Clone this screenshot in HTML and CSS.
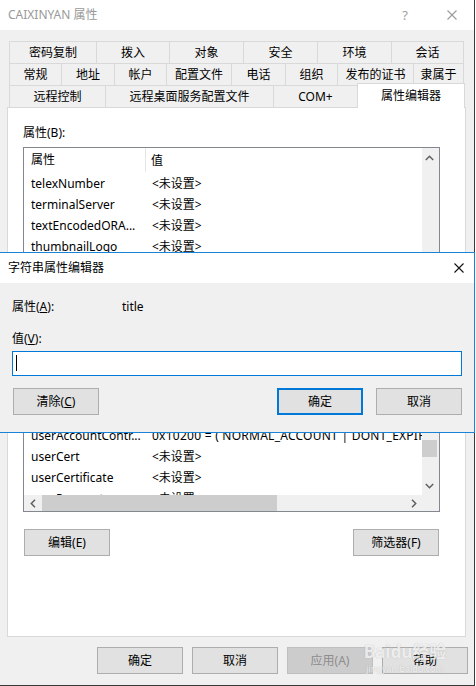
FILE: index.html
```html
<!DOCTYPE html>
<html lang="zh-CN">
<head>
<meta charset="utf-8">
<title>CAIXINYAN 属性</title>
<link rel="stylesheet" href="styles.css">
</head>
<body>
<div class="screen">
  <div class="window">
    <div class="titlebar">
      <span class="title">CAIXINYAN 属性</span>
      <span class="help">?</span>
      <svg class="close" width="10" height="10" viewBox="0 0 10 10"><path d="M0.5 0.5L9.5 9.5M9.5 0.5L0.5 9.5" stroke="#9a9a9a" stroke-width="1.1" fill="none"/></svg>
    </div>

    <div class="tabs">
      <div class="tabrow r1">
        <div class="tab">密码复制</div><div class="tab">拨入</div><div class="tab">对象</div><div class="tab">安全</div><div class="tab">环境</div><div class="tab">会话</div>
      </div>
      <div class="tabrow r2">
        <div class="tab">常规</div><div class="tab">地址</div><div class="tab">帐户</div><div class="tab">配置文件</div><div class="tab">电话</div><div class="tab">组织</div><div class="tab">发布的证书</div><div class="tab">隶属于</div>
      </div>
      <div class="tabrow r3">
        <div class="tab">远程控制</div><div class="tab">远程桌面服务配置文件</div><div class="tab">COM+</div><div class="tab sel">属性编辑器</div>
      </div>
    </div>

    <div class="panel">
      <div class="label">属性(B):</div>
      <div class="list">
        <div class="list-main">
          <div class="lhead"><div class="c1">属性</div><div class="c2 h2">值</div></div>
          <div class="row"><span class="c1">telexNumber</span><span class="c2">&lt;未设置&gt;</span></div>
          <div class="row"><span class="c1">terminalServer</span><span class="c2">&lt;未设置&gt;</span></div>
          <div class="row"><span class="c1">textEncodedORA...</span><span class="c2">&lt;未设置&gt;</span></div>
          <div class="row"><span class="c1">thumbnailLogo</span><span class="c2">&lt;未设置&gt;</span></div>
          <div class="hidden-rows"></div>
          <div class="row"><span class="c1">userAccountContr...</span><span class="c2 wide">0x10200 = ( NORMAL_ACCOUNT | DONT_EXPIRE_PASSWD )</span></div>
          <div class="row"><span class="c1">userCert</span><span class="c2">&lt;未设置&gt;</span></div>
          <div class="row"><span class="c1">userCertificate</span><span class="c2">&lt;未设置&gt;</span></div>
          <div class="row"><span class="c1">userParameters</span><span class="c2">&lt;未设置&gt;</span></div>
        </div>
        <div class="vscroll">
          <div class="arrow up"><svg width="9" height="6" viewBox="0 0 9 6"><polyline points="0.8,5 4.5,1.3 8.2,5" fill="none" stroke="#606060" stroke-width="1.5"/></svg></div>
          <div class="vspace1"></div>
          <div class="vthumb"></div>
          <div class="vspace2"></div>
          <div class="arrow down"><svg width="9" height="6" viewBox="0 0 9 6"><polyline points="0.8,1 4.5,4.7 8.2,1" fill="none" stroke="#606060" stroke-width="1.5"/></svg></div>
        </div>
        <div class="hscroll">
          <div class="harrow"><svg width="6" height="9" viewBox="0 0 6 9"><polyline points="5,0.8 1.3,4.5 5,8.2" fill="none" stroke="#606060" stroke-width="1.5"/></svg></div>
          <div class="hthumb"></div>
          <div class="hspace"></div>
          <div class="harrow"><svg width="6" height="9" viewBox="0 0 6 9"><polyline points="1,0.8 4.7,4.5 1,8.2" fill="none" stroke="#606060" stroke-width="1.5"/></svg></div>
        </div>
        <div class="corner"></div>
      </div>
      <div class="pbtns">
        <button class="btn">编辑(E)</button>
        <button class="btn">筛选器(F)</button>
      </div>
    </div>

    <div class="footer">
      <button class="btn">确定</button>
      <button class="btn">取消</button>
      <button class="btn disabled">应用(A)</button>
      <button class="btn">帮助</button>
    </div>
  </div>

  <div class="dialog">
    <div class="dtitle">
      <span class="dtext">字符串属性编辑器</span>
      <svg class="dclose" width="10" height="10" viewBox="0 0 10 10"><path d="M0.5 0.5L9.5 9.5M9.5 0.5L0.5 9.5" stroke="#111" stroke-width="1.1" fill="none"/></svg>
    </div>
    <div class="dbody">
      <div class="drow"><span class="dlabel">属性(<u>A</u>):</span><span>title</span></div>
      <div class="drow second"><span class="dlabel">值(<u>V</u>):</span></div>
      <div class="dinput"><span class="caret"></span></div>
      <div class="dbtns">
        <button class="btn clear">清除(<u>C</u>)</button>
        <div class="dspace"></div>
        <button class="btn ok">确定</button>
        <button class="btn">取消</button>
      </div>
    </div>
  </div>

  <div class="watermark">
    <span class="wm-big">Bai<span class="wm-du">du</span>经验</span>
    <span class="wm-small">jingyan.baidu.com</span>
  </div>
</div>
</body>
</html>
```

FILE: styles.css
```css
* { box-sizing: border-box; }
html, body { margin: 0; padding: 0; background: #fff; }
body {
  font-family: "Noto Sans", "Noto Sans CJK SC", sans-serif;
  font-size: 12px;
  line-height: 16px;
  color: #000;
}
.screen { position: relative; width: 476px; height: 686px; overflow: hidden; }
.window {
  width: 475px;
  height: 686px;
  background: #f0f0f0;
  border-right: 1px solid #3a3a3a;
  border-bottom: 1px solid #3a3a3a;
}
.titlebar {
  height: 30px;
  background: #fff;
  display: flex;
  align-items: center;
  padding-left: 8px;
  padding-right: 17px;
  color: #999;
}
.title { flex: 1; }
.help { width: 12px; text-align: center; font-size: 13px; margin-right: 36px; color: #a0a0a0; }
.close { display: block; }

.tabs { padding: 11px 0 0 9px; }
.tabrow { display: grid; height: 22px; grid-template-rows: 22px; }
.r1 { grid-template-columns: 87px 73px 74px 74px 74px 73px; }
.r2 { grid-template-columns: 52px 53px 52px 65px 54px 52px 76px 51px; }
.r3 { grid-template-columns: 96px 168px 84px 108px; }
.tab {
  border-top: 1px solid #d9d9d9;
  border-left: 1px solid #d9d9d9;
  display: flex;
  align-items: center;
  justify-content: center;
  white-space: nowrap;
}
.tab:last-child { border-right: 1px solid #d9d9d9; }
.tab.sel {
  background: #fff;
  height: 25px;
  margin-top: -2px;
  position: relative;
  z-index: 1;
}

.panel {
  margin-left: 7px;
  width: 459px;
  height: 530px;
  background: #fff;
  border: 1px solid #d9d9d9;
  padding: 17px 0 0 15px;
}
.label { height: 16px; }
.list {
  margin-top: 6px;
  width: 417px;
  height: 365px;
  border: 1px solid #828790;
  display: grid;
  grid-template-columns: 398px 17px;
  grid-template-rows: 347px 16px;
}
.list-main { overflow: hidden; background: #fff; }
.lhead { height: 25px; display: flex; align-items: stretch; }
.lhead .c1 { border-right: 1px solid #e5e5e5; display: flex; align-items: center; height: 24px; }
.lhead .c2 { display: flex; align-items: center; padding-left: 5px; }
.row { height: 21px; display: flex; align-items: center; white-space: nowrap; }
.hidden-rows { height: 168px; }
.c1 { width: 122px; flex: none; padding-left: 7px; white-space: nowrap; overflow: hidden; }
.c2 { padding-left: 6px; white-space: nowrap; }
.c2.wide { letter-spacing: 0.25px; }

.vscroll { background: #f0f0f0; display: flex; flex-direction: column; }
.arrow { display: flex; align-items: center; justify-content: center; width: 15px; }
.arrow.up { height: 20px; }
.arrow.down { height: 18px; }
.arrow svg, .harrow svg { display: block; }
.vspace1 { height: 272px; }
.vthumb { height: 17px; width: 15px; background: #cdcdcd; }
.vspace2 { height: 20px; }
.hscroll { background: #f0f0f0; display: flex; }
.harrow { width: 17px; display: flex; align-items: center; justify-content: center; }
.hthumb { width: 235px; margin-left: 1px; background: #cdcdcd; }
.hspace { flex: 1; }
.corner { background: #f0f0f0; }

.btn {
  width: 86px;
  height: 27px;
  background: #e1e1e1;
  border: 1px solid #adadad;
  font: inherit;
  color: #000;
  padding: 0;
  margin: 0;
  display: flex;
  align-items: center;
  justify-content: center;
}
.btn.disabled { background: #cccccc; border-color: #bfbfbf; color: #8d8d8d; }
.pbtns {
  display: flex;
  justify-content: space-between;
  margin-top: 17px;
  width: 416px;
  padding-left: 1px;
}
.footer {
  display: flex;
  justify-content: flex-end;
  gap: 9px;
  padding: 10px 6px 0 0;
}

.dialog {
  position: absolute;
  top: 252px;
  left: -1px;
  width: 476px;
  height: 181px;
  border: 1px solid #1883d7;
  background: #f0f0f0;
  z-index: 5;
}
.dtitle {
  height: 30px;
  background: #fff;
  display: flex;
  align-items: center;
  padding: 0 10px 0 8px;
}
.dtext { flex: 1; }
.dclose { display: block; }
.dbody { padding: 16px 12px 16px 12px; }
.drow { display: flex; height: 16px; }
.drow.second { margin-top: 16px; }
.dlabel { width: 110px; }
.dinput {
  margin-top: 4px;
  height: 25px;
  border: 1px solid #0078d7;
  background: #fff;
  padding: 3px 0 0 3px;
}
.caret { display: block; width: 1px; height: 16px; background: #000; }
.dbtns { display: flex; margin-top: 12px; }
.clear { margin-left: 1px; }
.dspace { flex: 1; }
.ok { border: 2px solid #0078d7; margin-right: 13px; }

.watermark {
  position: absolute;
  left: 360px;
  top: 641px;
  width: 90px;
  display: flex;
  flex-direction: column;
  align-items: center;
  color: rgba(255, 255, 255, 0.8);
  text-shadow: 0 0 1px rgba(120, 120, 120, 0.5);
  pointer-events: none;
  z-index: 6;
}
.wm-big { font-size: 17px; line-height: 22px; font-weight: bold; letter-spacing: 0; }
.wm-du { font-weight: bold; }
.wm-small { font-size: 9px; line-height: 11px; }
```
